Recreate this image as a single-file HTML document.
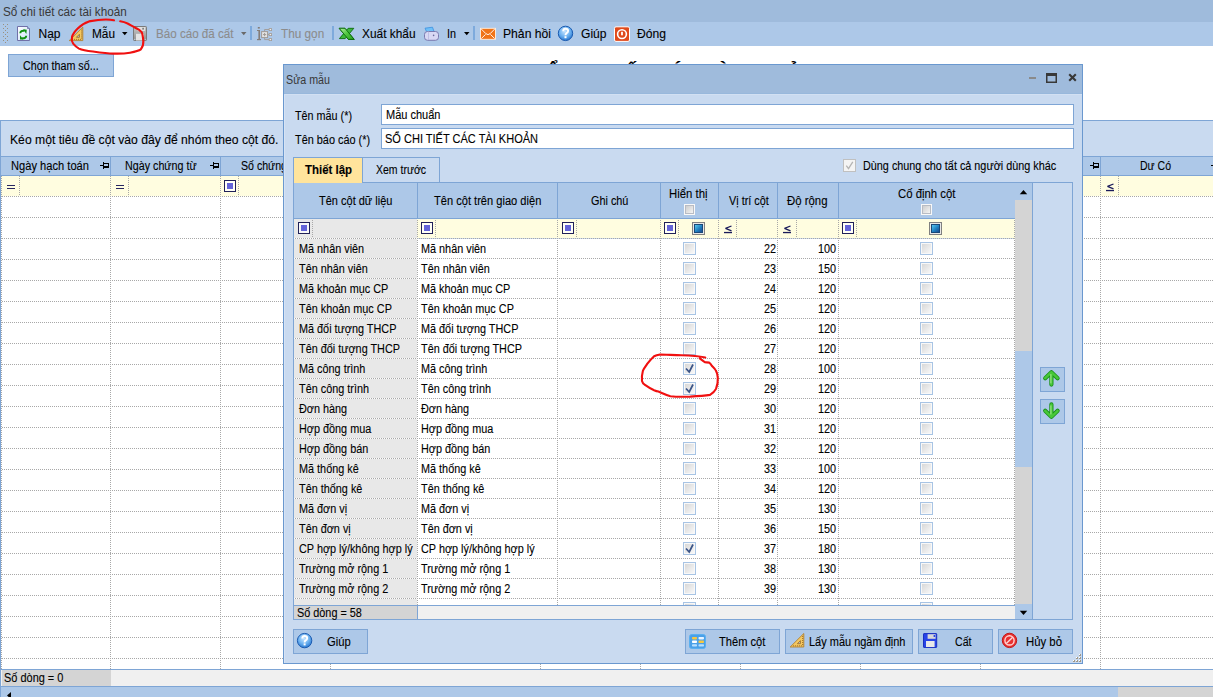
<!DOCTYPE html>
<html><head><meta charset="utf-8"><title>Sửa mẫu</title>
<style>
html,body{margin:0;padding:0;}
body{width:1213px;height:697px;overflow:hidden;position:relative;background:#fff;font-family:"Liberation Sans", sans-serif;}
.a{position:absolute;}
.t{position:absolute;white-space:pre;-webkit-text-stroke-width:0.1px;}
</style></head><body>
<svg width="0" height="0" style="position:absolute"><defs><radialGradient id="hg" cx="45%" cy="35%" r="65%"><stop offset="0" stop-color="#c8e6ff"/><stop offset="0.6" stop-color="#6ab0f0"/><stop offset="1" stop-color="#2a78d0"/></radialGradient><linearGradient id="gg" x1="0" y1="0" x2="1" y2="1"><stop offset="0" stop-color="#b8f0a8"/><stop offset="0.5" stop-color="#50c840"/><stop offset="1" stop-color="#28a020"/></linearGradient><linearGradient id="cbg" x1="0" y1="0" x2="1" y2="1"><stop offset="0" stop-color="#c8c8c8"/><stop offset="1" stop-color="#fafafa"/></linearGradient><linearGradient id="flg" x1="0" y1="0" x2="1" y2="1"><stop offset="0" stop-color="#70d0ff"/><stop offset="1" stop-color="#0858a0"/></linearGradient><linearGradient id="pageg" x1="0" y1="0" x2="1" y2="1"><stop offset="0" stop-color="#ffffff"/><stop offset="1" stop-color="#c8e0f8"/></linearGradient><linearGradient id="flopg" x1="0" y1="0" x2="0" y2="1"><stop offset="0" stop-color="#c8c8c8"/><stop offset="1" stop-color="#909090"/></linearGradient></defs></svg>
<div class="a" style="left:0px;top:0px;width:1213px;height:22px;background:#9fbbdc;"></div>
<div class="t" style="left:2.60px;top:5.03px;font-size:12px;line-height:14px;color:#383838;font-weight:normal;transform:scaleX(0.9768);transform-origin:0 0;-webkit-text-stroke-width:0;">Sổ chi tiết các tài khoản</div>
<div class="a" style="left:0px;top:22px;width:1213px;height:24px;background:#adc8e8;"></div>
<div class="a" style="left:3px;top:24px;width:1px;height:1px;background:#9a9080;"></div>
<div class="a" style="left:7px;top:24px;width:1px;height:1px;background:#9a9080;"></div>
<div class="a" style="left:5px;top:26px;width:1px;height:1px;background:#9a9080;"></div>
<div class="a" style="left:3px;top:28px;width:1px;height:1px;background:#9a9080;"></div>
<div class="a" style="left:7px;top:28px;width:1px;height:1px;background:#9a9080;"></div>
<div class="a" style="left:5px;top:30px;width:1px;height:1px;background:#9a9080;"></div>
<div class="a" style="left:3px;top:32px;width:1px;height:1px;background:#9a9080;"></div>
<div class="a" style="left:7px;top:32px;width:1px;height:1px;background:#9a9080;"></div>
<div class="a" style="left:5px;top:34px;width:1px;height:1px;background:#9a9080;"></div>
<div class="a" style="left:3px;top:36px;width:1px;height:1px;background:#9a9080;"></div>
<div class="a" style="left:7px;top:36px;width:1px;height:1px;background:#9a9080;"></div>
<div class="a" style="left:5px;top:38px;width:1px;height:1px;background:#9a9080;"></div>
<div class="a" style="left:3px;top:40px;width:1px;height:1px;background:#9a9080;"></div>
<div class="a" style="left:7px;top:40px;width:1px;height:1px;background:#9a9080;"></div>
<div class="a" style="left:5px;top:42px;width:1px;height:1px;background:#9a9080;"></div>
<div class="t" style="left:38.50px;top:27.03px;font-size:12px;line-height:14px;color:#000;font-weight:normal;">Nạp</div>
<div class="t" style="left:91.70px;top:27.03px;font-size:12px;line-height:14px;color:#000;font-weight:normal;transform:scaleX(0.9853);transform-origin:0 0;">Mẫu</div>
<div class="t" style="left:156.30px;top:27.03px;font-size:12px;line-height:14px;color:#8c8c8c;font-weight:normal;transform:scaleX(0.9681);transform-origin:0 0;">Báo cáo đã cất</div>
<div class="t" style="left:280.80px;top:27.03px;font-size:12px;line-height:14px;color:#8c8c8c;font-weight:normal;transform:scaleX(0.9811);transform-origin:0 0;">Thu gọn</div>
<div class="t" style="left:362.00px;top:27.03px;font-size:12px;line-height:14px;color:#000;font-weight:normal;transform:scaleX(0.9900);transform-origin:0 0;">Xuất khẩu</div>
<div class="t" style="left:447.00px;top:27.03px;font-size:12px;line-height:14px;color:#000;font-weight:normal;transform:scaleX(0.8993);transform-origin:0 0;">In</div>
<div class="t" style="left:503.30px;top:27.03px;font-size:12px;line-height:14px;color:#000;font-weight:normal;transform:scaleX(1.0132);transform-origin:0 0;">Phản hồi</div>
<div class="t" style="left:581.00px;top:27.03px;font-size:12px;line-height:14px;color:#000;font-weight:normal;transform:scaleX(1.0060);transform-origin:0 0;">Giúp</div>
<div class="t" style="left:637.20px;top:27.03px;font-size:12px;line-height:14px;color:#000;font-weight:normal;transform:scaleX(1.0109);transform-origin:0 0;">Đóng</div>
<svg class="a" style="left:121px;top:31px;overflow:visible;" width="8" height="6" viewBox="121 31 8 6"><path d="M122 32H127.5L124.75 35.2Z" fill="#000"/></svg>
<svg class="a" style="left:240px;top:31px;overflow:visible;" width="8" height="6" viewBox="240 31 8 6"><path d="M241 32H246.5L243.75 35.2Z" fill="#6a6a6a"/></svg>
<svg class="a" style="left:463px;top:31px;overflow:visible;" width="8" height="6" viewBox="463 31 8 6"><path d="M464 32H469.5L466.75 35.2Z" fill="#000"/></svg>
<div class="a" style="left:250px;top:26px;width:2px;height:14px;background:#7eaadc;"></div>
<div class="a" style="left:332px;top:26px;width:2px;height:14px;background:#7eaadc;"></div>
<div class="a" style="left:473px;top:26px;width:2px;height:14px;background:#7eaadc;"></div>
<svg class="a" style="left:16px;top:25px;overflow:visible;" width="16" height="17" viewBox="16 25 16 17"><path d="M17.5 26.5H27.5L29.5 28.5V40.5H17.5Z" fill="url(#pageg)" stroke="#7070a8"/><path d="M27.5 26.5V28.5H29.5" fill="#9ad0f0" stroke="#7070a8" stroke-width="0.8"/><path d="M20.3 33.3C20.3 31.2 22 30.5 24.5 30.8" stroke="#109010" stroke-width="2" fill="none"/><path d="M23.2 29.2L26.8 29.8L26.3 34Z" fill="#109010"/><path d="M26.2 35.8C26.2 37.8 24.5 38.6 22 38.3" stroke="#109010" stroke-width="2" fill="none"/><path d="M20 35.2V39.6H23.5Z" fill="#109010"/></svg>
<svg class="a" style="left:68px;top:26px;overflow:visible;" width="16" height="16" viewBox="68 26 16 16"><path d="M69.2 40.6L82.8 27.1V40.6Z" fill="#f4c860" stroke="#b08030" stroke-width="0.9" stroke-linejoin="round"/><path d="M76.4 37.3L79.4 34.300000000000004V37.3Z" fill="#adc8e8" stroke="#a07028" stroke-width="0.9"/><rect x="72.2" y="38.800000000000004" width="0.9" height="1.2" fill="#a07028"/><rect x="81.0" y="29.6" width="1.2" height="0.9" fill="#a07028"/><rect x="74.2" y="38.800000000000004" width="0.9" height="1.2" fill="#a07028"/><rect x="81.0" y="31.6" width="1.2" height="0.9" fill="#a07028"/><rect x="76.2" y="38.800000000000004" width="0.9" height="1.2" fill="#a07028"/><rect x="81.0" y="33.6" width="1.2" height="0.9" fill="#a07028"/><rect x="78.2" y="38.800000000000004" width="0.9" height="1.2" fill="#a07028"/><rect x="81.0" y="35.6" width="1.2" height="0.9" fill="#a07028"/><rect x="80.2" y="38.800000000000004" width="0.9" height="1.2" fill="#a07028"/><rect x="81.0" y="37.6" width="1.2" height="0.9" fill="#a07028"/></svg>
<svg class="a" style="left:132px;top:25px;overflow:visible;" width="16" height="17" viewBox="132 25 16 17"><rect x="133.5" y="26.5" width="13" height="14" rx="0.8" fill="url(#flopg)" stroke="#7a7a7a"/><rect x="137.5" y="27" width="7.5" height="4" fill="#e0e0e0"/><rect x="142.3" y="27.8" width="1.6" height="1.8" fill="#777"/><rect x="136" y="33.8" width="8" height="6.7" fill="#e4e4e4"/><circle cx="134.8" cy="39.3" r="0.6" fill="#cde"/><circle cx="145.2" cy="39.3" r="0.6" fill="#cde"/></svg>
<svg class="a" style="left:256px;top:26px;overflow:visible;" width="17" height="16" viewBox="256 26 17 16"><rect x="257.8" y="27" width="2" height="1.6" fill="#857d78"/><rect x="258.4" y="30" width="1.6" height="9.5" fill="#857d78"/><rect x="257" y="30" width="2.8" height="1" fill="#857d78"/><rect x="257" y="39" width="4" height="1.2" fill="#857d78"/><rect x="261.6" y="31.6" width="6" height="6" fill="#e4e4e4" stroke="#a09a95"/><path d="M264.6 33V36.2M263 34.6H266.2" stroke="#a09a95" stroke-width="1"/><path d="M264.6 31.5V29.5H269M267.7 34.6H269M264.6 37.6V39.6H269" stroke="#a09a95" stroke-width="0.9" fill="none"/><rect x="269.2" y="28.6" width="2.4" height="2" fill="#eee" stroke="#a09a95" stroke-width="0.8"/><rect x="269.2" y="33.6" width="2.4" height="2" fill="#eee" stroke="#a09a95" stroke-width="0.8"/><rect x="269.2" y="38.6" width="2.4" height="2" fill="#eee" stroke="#a09a95" stroke-width="0.8"/></svg>
<svg class="a" style="left:338px;top:27px;overflow:visible;" width="18" height="14" viewBox="338 27 18 14"><path d="M339.2 28.3H345L354.2 39.4H348.4Z" fill="url(#gg)" stroke="#0a6a0a" stroke-width="0.9" stroke-linejoin="round"/><path d="M348.2 28.3H353.8L345.2 38.6H339.4Z" fill="#3cb83c" stroke="#0a6a0a" stroke-width="0.9" stroke-linejoin="round"/><path d="M339.2 28.3H345L354.2 39.4H348.4Z" fill="url(#gg)" stroke="#0a6a0a" stroke-width="0.9" stroke-linejoin="round" opacity="0.95"/></svg>
<svg class="a" style="left:423px;top:26px;overflow:visible;" width="17" height="16" viewBox="423 26 17 16"><path d="M425 28.2L432.5 27.2L434 31.5H426.5Z" fill="#70c0f8" stroke="#3a90e0" stroke-width="0.8"/><rect x="424.5" y="31.5" width="14" height="8.8" rx="3" fill="#d8d8f4" stroke="#7a7ab0"/><path d="M428.5 31.5V40" stroke="#b8b8e0" stroke-width="0.8"/><circle cx="433.6" cy="35.4" r="0.8" fill="#6a6a9a"/></svg>
<svg class="a" style="left:479px;top:27px;overflow:visible;" width="18" height="14" viewBox="479 27 18 14"><rect x="480.5" y="28.3" width="15" height="11" fill="#f07418" stroke="#fff0e0" stroke-width="0.9"/><path d="M481.3 29L485.6 33.4Q488 36 490.4 33.4L494.7 29M481.3 38.6L485.6 34.4M494.7 38.6L490.4 34.4" stroke="#fff" stroke-width="0.9" fill="none"/></svg>
<svg class="a" style="left:557px;top:25px;overflow:visible;" width="18" height="18" viewBox="557 25 18 18"><circle cx="565.5" cy="33.4" r="7.2" fill="url(#hg)" stroke="#1a5ab0" stroke-width="1"/><path d="M563.2 31.2Q563.2 28.799999999999997 565.5 28.799999999999997Q568.1 28.799999999999997 568.1 31.0Q568.1 32.4 566.3 33.4Q565.5 34.0 565.5 35.199999999999996" stroke="#fff" stroke-width="1.9" fill="none"/><rect x="564.5" y="36.199999999999996" width="2" height="2" fill="#fff"/></svg>
<svg class="a" style="left:613px;top:25px;overflow:visible;" width="18" height="18" viewBox="613 25 18 18"><rect x="614.5" y="26.8" width="15" height="14.6" rx="1.5" fill="#e04a1c" stroke="#fff" stroke-width="1"/><circle cx="622" cy="34.1" r="4.4" fill="none" stroke="#fff" stroke-width="1.6"/><rect x="621.1" y="31.8" width="1.8" height="3.5" fill="#fff"/></svg>
<div class="a" style="left:8px;top:54px;width:106px;height:23px;background:#adc8e8;box-sizing:border-box;border:1px solid #7ea5d5;"></div>
<div class="t" style="left:23.40px;top:59.03px;font-size:12px;line-height:14px;color:#000;font-weight:normal;transform:scaleX(0.8925);transform-origin:0 0;">Chọn tham số...</div>
<div class="t" style="left:532.00px;top:61.39px;font-size:20px;line-height:23px;color:#000;font-weight:bold;">SỔ CHI TIẾT CÁC TÀI KHOẢN</div>
<div class="a" style="left:0px;top:120px;width:1213px;height:1px;background:#7ea5d5;"></div>
<div class="a" style="left:0px;top:120px;width:1px;height:577px;background:#7ea5d5;"></div>
<div class="a" style="left:1px;top:121px;width:1212px;height:35px;background:#c9daf0;"></div>
<div class="t" style="left:9.50px;top:133.03px;font-size:12px;line-height:14px;color:#000;font-weight:normal;transform:scaleX(1.0138);transform-origin:0 0;">Kéo một tiêu đề cột vào đây để nhóm theo cột đó.</div>
<div class="a" style="left:0px;top:156px;width:1213px;height:1px;background:#7ea5d5;"></div>
<div class="a" style="left:1px;top:157px;width:1212px;height:18px;background:#adc8e8;"></div>
<div class="a" style="left:0px;top:175px;width:1213px;height:1px;background:#7ea5d5;"></div>
<div class="a" style="left:1px;top:176px;width:1212px;height:20px;background:#fffde0;"></div>
<div class="a" style="left:1px;top:197px;width:1212px;height:472px;background:#fff;"></div>
<div class="a" style="left:110px;top:157px;width:1px;height:18px;background:#7ea5d5;"></div>
<div class="a" style="left:110px;top:176px;width:1px;height:493px;background:repeating-linear-gradient(to bottom,#a8a8a8 0 1px,transparent 1px 2px);"></div>
<div class="a" style="left:220px;top:157px;width:1px;height:18px;background:#7ea5d5;"></div>
<div class="a" style="left:220px;top:176px;width:1px;height:493px;background:repeating-linear-gradient(to bottom,#a8a8a8 0 1px,transparent 1px 2px);"></div>
<div class="a" style="left:330px;top:157px;width:1px;height:18px;background:#7ea5d5;"></div>
<div class="a" style="left:330px;top:176px;width:1px;height:493px;background:repeating-linear-gradient(to bottom,#a8a8a8 0 1px,transparent 1px 2px);"></div>
<div class="a" style="left:540px;top:157px;width:1px;height:18px;background:#7ea5d5;"></div>
<div class="a" style="left:540px;top:176px;width:1px;height:493px;background:repeating-linear-gradient(to bottom,#a8a8a8 0 1px,transparent 1px 2px);"></div>
<div class="a" style="left:640px;top:157px;width:1px;height:18px;background:#7ea5d5;"></div>
<div class="a" style="left:640px;top:176px;width:1px;height:493px;background:repeating-linear-gradient(to bottom,#a8a8a8 0 1px,transparent 1px 2px);"></div>
<div class="a" style="left:740px;top:157px;width:1px;height:18px;background:#7ea5d5;"></div>
<div class="a" style="left:740px;top:176px;width:1px;height:493px;background:repeating-linear-gradient(to bottom,#a8a8a8 0 1px,transparent 1px 2px);"></div>
<div class="a" style="left:860px;top:157px;width:1px;height:18px;background:#7ea5d5;"></div>
<div class="a" style="left:860px;top:176px;width:1px;height:493px;background:repeating-linear-gradient(to bottom,#a8a8a8 0 1px,transparent 1px 2px);"></div>
<div class="a" style="left:980px;top:157px;width:1px;height:18px;background:#7ea5d5;"></div>
<div class="a" style="left:980px;top:176px;width:1px;height:493px;background:repeating-linear-gradient(to bottom,#a8a8a8 0 1px,transparent 1px 2px);"></div>
<div class="a" style="left:1100px;top:157px;width:1px;height:18px;background:#7ea5d5;"></div>
<div class="a" style="left:1100px;top:176px;width:1px;height:493px;background:repeating-linear-gradient(to bottom,#a8a8a8 0 1px,transparent 1px 2px);"></div>
<div class="a" style="left:1px;top:196px;width:1212px;height:1px;background:repeating-linear-gradient(to right,transparent 0 1px,#a8a8a8 1px 2px);"></div>
<div class="a" style="left:1px;top:217px;width:1212px;height:1px;background:repeating-linear-gradient(to right,transparent 0 1px,#a8a8a8 1px 2px);"></div>
<div class="a" style="left:1px;top:238px;width:1212px;height:1px;background:repeating-linear-gradient(to right,transparent 0 1px,#a8a8a8 1px 2px);"></div>
<div class="a" style="left:1px;top:259px;width:1212px;height:1px;background:repeating-linear-gradient(to right,transparent 0 1px,#a8a8a8 1px 2px);"></div>
<div class="a" style="left:1px;top:280px;width:1212px;height:1px;background:repeating-linear-gradient(to right,transparent 0 1px,#a8a8a8 1px 2px);"></div>
<div class="a" style="left:1px;top:301px;width:1212px;height:1px;background:repeating-linear-gradient(to right,transparent 0 1px,#a8a8a8 1px 2px);"></div>
<div class="a" style="left:1px;top:322px;width:1212px;height:1px;background:repeating-linear-gradient(to right,transparent 0 1px,#a8a8a8 1px 2px);"></div>
<div class="a" style="left:1px;top:343px;width:1212px;height:1px;background:repeating-linear-gradient(to right,transparent 0 1px,#a8a8a8 1px 2px);"></div>
<div class="a" style="left:1px;top:364px;width:1212px;height:1px;background:repeating-linear-gradient(to right,transparent 0 1px,#a8a8a8 1px 2px);"></div>
<div class="a" style="left:1px;top:385px;width:1212px;height:1px;background:repeating-linear-gradient(to right,transparent 0 1px,#a8a8a8 1px 2px);"></div>
<div class="a" style="left:1px;top:406px;width:1212px;height:1px;background:repeating-linear-gradient(to right,transparent 0 1px,#a8a8a8 1px 2px);"></div>
<div class="a" style="left:1px;top:427px;width:1212px;height:1px;background:repeating-linear-gradient(to right,transparent 0 1px,#a8a8a8 1px 2px);"></div>
<div class="a" style="left:1px;top:448px;width:1212px;height:1px;background:repeating-linear-gradient(to right,transparent 0 1px,#a8a8a8 1px 2px);"></div>
<div class="a" style="left:1px;top:469px;width:1212px;height:1px;background:repeating-linear-gradient(to right,transparent 0 1px,#a8a8a8 1px 2px);"></div>
<div class="a" style="left:1px;top:490px;width:1212px;height:1px;background:repeating-linear-gradient(to right,transparent 0 1px,#a8a8a8 1px 2px);"></div>
<div class="a" style="left:1px;top:511px;width:1212px;height:1px;background:repeating-linear-gradient(to right,transparent 0 1px,#a8a8a8 1px 2px);"></div>
<div class="a" style="left:1px;top:532px;width:1212px;height:1px;background:repeating-linear-gradient(to right,transparent 0 1px,#a8a8a8 1px 2px);"></div>
<div class="a" style="left:1px;top:553px;width:1212px;height:1px;background:repeating-linear-gradient(to right,transparent 0 1px,#a8a8a8 1px 2px);"></div>
<div class="a" style="left:1px;top:574px;width:1212px;height:1px;background:repeating-linear-gradient(to right,transparent 0 1px,#a8a8a8 1px 2px);"></div>
<div class="a" style="left:1px;top:595px;width:1212px;height:1px;background:repeating-linear-gradient(to right,transparent 0 1px,#a8a8a8 1px 2px);"></div>
<div class="a" style="left:1px;top:616px;width:1212px;height:1px;background:repeating-linear-gradient(to right,transparent 0 1px,#a8a8a8 1px 2px);"></div>
<div class="a" style="left:1px;top:637px;width:1212px;height:1px;background:repeating-linear-gradient(to right,transparent 0 1px,#a8a8a8 1px 2px);"></div>
<div class="a" style="left:1px;top:658px;width:1212px;height:1px;background:repeating-linear-gradient(to right,transparent 0 1px,#a8a8a8 1px 2px);"></div>
<div class="a" style="left:1px;top:176px;width:1px;height:493px;background:repeating-linear-gradient(to bottom,#a8a8a8 0 1px,transparent 1px 2px);"></div>
<div class="t" style="left:10.60px;top:159.03px;font-size:12px;line-height:14px;color:#000;font-weight:normal;transform:scaleX(0.9279);transform-origin:0 0;">Ngày hạch toán</div>
<div class="t" style="left:124.50px;top:159.03px;font-size:12px;line-height:14px;color:#000;font-weight:normal;transform:scaleX(0.8938);transform-origin:0 0;">Ngày chứng từ</div>
<div class="t" style="left:240.80px;top:159.03px;font-size:12px;line-height:14px;color:#000;font-weight:normal;transform:scaleX(0.8837);transform-origin:0 0;">Số chứng từ</div>
<div class="t" style="left:1140.00px;top:159.03px;font-size:12px;line-height:14px;color:#000;font-weight:normal;transform:scaleX(0.8764);transform-origin:0 0;">Dư Có</div>
<div class="a" style="left:100px;top:165px;width:3px;height:1px;background:#000;"></div>
<div class="a" style="left:103px;top:162px;width:1px;height:7px;background:#000;"></div>
<div class="a" style="left:104px;top:163px;width:5px;height:1px;background:#000;"></div>
<div class="a" style="left:108px;top:163px;width:1px;height:5px;background:#000;"></div>
<div class="a" style="left:104px;top:166px;width:5px;height:2px;background:#000;"></div>
<div class="a" style="left:210px;top:165px;width:3px;height:1px;background:#000;"></div>
<div class="a" style="left:213px;top:162px;width:1px;height:7px;background:#000;"></div>
<div class="a" style="left:214px;top:163px;width:5px;height:1px;background:#000;"></div>
<div class="a" style="left:218px;top:163px;width:1px;height:5px;background:#000;"></div>
<div class="a" style="left:214px;top:166px;width:5px;height:2px;background:#000;"></div>
<div class="a" style="left:1090px;top:165px;width:3px;height:1px;background:#000;"></div>
<div class="a" style="left:1093px;top:162px;width:1px;height:7px;background:#000;"></div>
<div class="a" style="left:1094px;top:163px;width:5px;height:1px;background:#000;"></div>
<div class="a" style="left:1098px;top:163px;width:1px;height:5px;background:#000;"></div>
<div class="a" style="left:1094px;top:166px;width:5px;height:2px;background:#000;"></div>
<div class="a" style="left:1211px;top:165px;width:3px;height:1px;background:#000;"></div>
<div class="a" style="left:1214px;top:162px;width:1px;height:7px;background:#000;"></div>
<div class="a" style="left:1215px;top:163px;width:5px;height:1px;background:#000;"></div>
<div class="a" style="left:1219px;top:163px;width:1px;height:5px;background:#000;"></div>
<div class="a" style="left:1215px;top:166px;width:5px;height:2px;background:#000;"></div>
<div class="a" style="left:7px;top:184.6px;width:8px;height:1.6px;background:#262660;"></div>
<div class="a" style="left:7px;top:187.6px;width:8px;height:1.6px;background:#262660;"></div>
<div class="a" style="left:116px;top:184.6px;width:8px;height:1.6px;background:#262660;"></div>
<div class="a" style="left:116px;top:187.6px;width:8px;height:1.6px;background:#262660;"></div>
<div class="a" style="left:19px;top:176px;width:1px;height:20px;background:repeating-linear-gradient(to bottom,#a8a8a8 0 1px,transparent 1px 2px);"></div>
<div class="a" style="left:128px;top:176px;width:1px;height:20px;background:repeating-linear-gradient(to bottom,#a8a8a8 0 1px,transparent 1px 2px);"></div>
<div class="a" style="left:238px;top:176px;width:1px;height:20px;background:repeating-linear-gradient(to bottom,#a8a8a8 0 1px,transparent 1px 2px);"></div>
<div class="a" style="left:1118px;top:176px;width:1px;height:20px;background:repeating-linear-gradient(to bottom,#a8a8a8 0 1px,transparent 1px 2px);"></div>
<div class="a" style="left:224px;top:180px;width:12px;height:12px;background:rgba(255,255,255,0.7);box-sizing:border-box;border:1px solid #202058;"></div>
<div class="a" style="left:227px;top:183px;width:6px;height:6px;background:#6464d8;"></div>
<svg class="a" style="left:1105px;top:182px;overflow:visible;" width="11" height="11" viewBox="1105 182 11 11"><path d="M1113.5 184L1107.5 186.3L1113.5 188.8" stroke="#1a1a5a" stroke-width="1.3" fill="none" stroke-linejoin="bevel"/><rect x="1106" y="189.9" width="8" height="1.3" fill="#1a1a5a"/></svg>
<div class="a" style="left:0px;top:669px;width:1213px;height:1px;background:#7ea5d5;"></div>
<div class="a" style="left:1px;top:670px;width:1212px;height:16px;background:#f0f0f0;"></div>
<div class="a" style="left:2px;top:670px;width:109px;height:16px;background:#d4d4d4;"></div>
<div class="t" style="left:4.40px;top:671.03px;font-size:12px;line-height:14px;color:#000;font-weight:normal;transform:scaleX(0.9130);transform-origin:0 0;">Số dòng = 0</div>
<div class="a" style="left:0px;top:686px;width:1213px;height:1px;background:#7ea5d5;"></div>
<div class="a" style="left:1px;top:687px;width:1117px;height:10px;background:#adc8e8;"></div>
<div class="a" style="left:1118px;top:687px;width:95px;height:10px;background:#d4d4d4;"></div>
<svg class="a" style="left:6px;top:690px;overflow:visible;" width="8" height="8" viewBox="6 690 8 8"><path d="M11 692L7 695.5L11 699Z" fill="#000"/></svg>
<div class="a" style="left:0px;top:669px;width:1px;height:28px;background:#7ea5d5;"></div>
<div class="a" style="left:283px;top:64px;width:800px;height:600px;background:#c9daf0;box-sizing:border-box;border:1px solid #6a98cf;"></div>
<div class="a" style="left:284px;top:94px;width:1px;height:569px;background:#d6e3f4;"></div>
<div class="a" style="left:284px;top:65px;width:798px;height:29px;background:#9fbbdc;"></div>
<div class="a" style="left:284px;top:93px;width:798px;height:1px;background:#98b8dc;"></div>
<div class="a" style="left:284px;top:94px;width:798px;height:1px;background:#d2e0f3;"></div>
<div class="t" style="left:286.00px;top:73.03px;font-size:12px;line-height:14px;color:#383838;font-weight:normal;transform:scaleX(0.8909);transform-origin:0 0;-webkit-text-stroke-width:0;">Sửa mẫu</div>
<div class="a" style="left:1029px;top:77px;width:7px;height:2px;background:#8a8a8a;"></div>
<svg class="a" style="left:1045px;top:72px;overflow:visible;" width="14" height="12" viewBox="1045 72 14 12"><rect x="1046.75" y="73.75" width="9.5" height="8.5" fill="none" stroke="#383838" stroke-width="1.5"/><rect x="1046" y="73" width="11" height="3" fill="#383838"/></svg>
<svg class="a" style="left:1067px;top:72px;overflow:visible;" width="11" height="11" viewBox="1067 72 11 11"><path d="M1069.2 74.2L1075.8 80.8M1075.8 74.2L1069.2 80.8" stroke="#383838" stroke-width="2.1"/></svg>
<div class="t" style="left:295.20px;top:109.03px;font-size:12px;line-height:14px;color:#000;font-weight:normal;transform:scaleX(0.8997);transform-origin:0 0;">Tên mẫu (*)</div>
<div class="t" style="left:295.20px;top:133.03px;font-size:12px;line-height:14px;color:#000;font-weight:normal;transform:scaleX(0.9068);transform-origin:0 0;">Tên báo cáo (*)</div>
<div class="a" style="left:381px;top:104px;width:693px;height:21px;background:#fff;box-sizing:border-box;border:1px solid #7ea5d5;"></div>
<div class="a" style="left:381px;top:128px;width:693px;height:21px;background:#fff;box-sizing:border-box;border:1px solid #7ea5d5;"></div>
<div class="t" style="left:385.50px;top:108.03px;font-size:12px;line-height:14px;color:#000;font-weight:normal;transform:scaleX(0.9179);transform-origin:0 0;">Mẫu chuẩn</div>
<div class="t" style="left:385.40px;top:132.03px;font-size:12px;line-height:14px;color:#000;font-weight:normal;transform:scaleX(0.9178);transform-origin:0 0;">SỔ CHI TIẾT CÁC TÀI KHOẢN</div>
<div class="a" style="left:293px;top:157px;width:147px;height:26px;background:#c9daf0;box-sizing:border-box;border:1px solid #7ea5d5;border-bottom:none;"></div>
<div class="a" style="left:294px;top:158px;width:68px;height:25px;background:#ffe49c;"></div>
<div class="a" style="left:362px;top:158px;width:1px;height:24px;background:#7ea5d5;"></div>
<div class="t" style="left:305.00px;top:163.03px;font-size:12px;line-height:14px;color:#000;font-weight:bold;transform:scaleX(0.9526);transform-origin:0 0;">Thiết lập</div>
<div class="t" style="left:375.80px;top:163.03px;font-size:12px;line-height:14px;color:#000;font-weight:normal;transform:scaleX(0.8753);transform-origin:0 0;">Xem trước</div>
<div class="a" style="left:843px;top:159px;width:13px;height:13px;background:#f4f4f4;box-sizing:border-box;border:1px solid #c0c0c0;"></div>
<svg class="a" style="left:844px;top:160px;overflow:visible;" width="11" height="11" viewBox="844 160 11 11"><path d="M846.3 165.6L848.5 168.6L852.8 161.8" stroke="#b4b4b4" stroke-width="1.3" fill="none"/></svg>
<div class="t" style="left:862.60px;top:159.03px;font-size:12px;line-height:14px;color:#000;font-weight:normal;transform:scaleX(0.9022);transform-origin:0 0;">Dùng chung cho tất cả người dùng khác</div>
<div class="a" style="left:293px;top:182px;width:780px;height:438px;background:#c9daf0;box-sizing:border-box;border:1px solid #7ea5d5;"></div>
<div class="a" style="left:294px;top:182px;width:68px;height:1px;background:#ffe49c;"></div>
<div class="a" style="left:294px;top:183px;width:68px;height:1px;background:#a6c6ec;"></div>
<div class="a" style="left:294px;top:183px;width:721px;height:35px;background:#adc8e8;"></div>
<div class="a" style="left:294px;top:218px;width:721px;height:1px;background:#7ea5d5;"></div>
<div class="a" style="left:417px;top:183px;width:1px;height:35px;background:#7ea5d5;"></div>
<div class="a" style="left:557px;top:183px;width:1px;height:35px;background:#7ea5d5;"></div>
<div class="a" style="left:660px;top:183px;width:1px;height:35px;background:#7ea5d5;"></div>
<div class="a" style="left:718px;top:183px;width:1px;height:35px;background:#7ea5d5;"></div>
<div class="a" style="left:777px;top:183px;width:1px;height:35px;background:#7ea5d5;"></div>
<div class="a" style="left:838px;top:183px;width:1px;height:35px;background:#7ea5d5;"></div>
<div class="a" style="left:1015px;top:183px;width:17px;height:422px;background:#d4d4d4;"></div>
<div class="a" style="left:1015px;top:183px;width:17px;height:17px;background:#adc8e8;"></div>
<svg class="a" style="left:1018px;top:188px;overflow:visible;" width="11" height="8" viewBox="1018 188 11 8"><path d="M1019.8 194.3H1027.2L1023.5 190Z" fill="#000"/></svg>
<div class="a" style="left:1015px;top:351px;width:17px;height:116px;background:#adc8e8;"></div>
<div class="a" style="left:1015px;top:604px;width:17px;height:15px;background:#adc8e8;"></div>
<svg class="a" style="left:1018px;top:609px;overflow:visible;" width="11" height="8" viewBox="1018 609 11 8"><path d="M1019.8 610.8H1027.2L1023.5 615Z" fill="#000"/></svg>
<div class="a" style="left:1032px;top:183px;width:1px;height:436px;background:#7ea5d5;"></div>
<div class="t" style="left:319.30px;top:194.03px;font-size:12px;line-height:14px;color:#000;font-weight:normal;transform:scaleX(0.9166);transform-origin:0 0;">Tên cột dữ liệu</div>
<div class="t" style="left:434.35px;top:194.03px;font-size:12px;line-height:14px;color:#000;font-weight:normal;transform:scaleX(0.9244);transform-origin:0 0;">Tên cột trên giao diện</div>
<div class="t" style="left:590.80px;top:194.03px;font-size:12px;line-height:14px;color:#000;font-weight:normal;transform:scaleX(0.9042);transform-origin:0 0;">Ghi chú</div>
<div class="t" style="left:669.25px;top:187.03px;font-size:12px;line-height:14px;color:#000;font-weight:normal;transform:scaleX(0.9462);transform-origin:0 0;">Hiển thị</div>
<div class="t" style="left:728.60px;top:194.03px;font-size:12px;line-height:14px;color:#000;font-weight:normal;transform:scaleX(0.9042);transform-origin:0 0;">Vị trí cột</div>
<div class="t" style="left:787.25px;top:194.03px;font-size:12px;line-height:14px;color:#000;font-weight:normal;transform:scaleX(0.9487);transform-origin:0 0;">Độ rộng</div>
<div class="t" style="left:897.75px;top:187.03px;font-size:12px;line-height:14px;color:#000;font-weight:normal;transform:scaleX(0.9472);transform-origin:0 0;">Cố định cột</div>
<div class="a" style="left:684px;top:204px;width:11px;height:11px;background:linear-gradient(135deg,#c8c8c8,#fafafa);box-sizing:border-box;border:1px solid #f8f8f8;"></div>
<div class="a" style="left:685px;top:205px;width:9px;height:9px;background:transparent;box-sizing:border-box;border:1px solid #b8bcc4;"></div>
<div class="a" style="left:921px;top:204px;width:11px;height:11px;background:linear-gradient(135deg,#c8c8c8,#fafafa);box-sizing:border-box;border:1px solid #f8f8f8;"></div>
<div class="a" style="left:922px;top:205px;width:9px;height:9px;background:transparent;box-sizing:border-box;border:1px solid #b8bcc4;"></div>
<div class="a" style="left:294px;top:219px;width:721px;height:19px;background:#fffde0;"></div>
<div class="a" style="left:294px;top:219px;width:123px;height:19px;background:#e8e8e8;"></div>
<div class="a" style="left:298px;top:222px;width:12px;height:12px;background:rgba(255,255,255,0.7);box-sizing:border-box;border:1px solid #202058;"></div>
<div class="a" style="left:301px;top:225px;width:6px;height:6px;background:#6464d8;"></div>
<div class="a" style="left:421px;top:222px;width:12px;height:12px;background:rgba(255,255,255,0.7);box-sizing:border-box;border:1px solid #202058;"></div>
<div class="a" style="left:424px;top:225px;width:6px;height:6px;background:#6464d8;"></div>
<div class="a" style="left:562px;top:222px;width:12px;height:12px;background:rgba(255,255,255,0.7);box-sizing:border-box;border:1px solid #202058;"></div>
<div class="a" style="left:565px;top:225px;width:6px;height:6px;background:#6464d8;"></div>
<div class="a" style="left:664px;top:222px;width:12px;height:12px;background:rgba(255,255,255,0.7);box-sizing:border-box;border:1px solid #202058;"></div>
<div class="a" style="left:667px;top:225px;width:6px;height:6px;background:#6464d8;"></div>
<div class="a" style="left:842px;top:222px;width:12px;height:12px;background:rgba(255,255,255,0.7);box-sizing:border-box;border:1px solid #202058;"></div>
<div class="a" style="left:845px;top:225px;width:6px;height:6px;background:#6464d8;"></div>
<div class="a" style="left:692px;top:222px;width:13px;height:13px;background:linear-gradient(135deg,#6ad0ff,#0a5aa8);box-sizing:border-box;border:1px solid #808080;"></div>
<div class="a" style="left:693px;top:223px;width:11px;height:11px;background:transparent;box-sizing:border-box;border:1px solid #e8e8e8;"></div>
<div class="a" style="left:694px;top:224px;width:9px;height:9px;background:linear-gradient(135deg,#58c8f0,#2080c0 55%,#1a4a90);box-sizing:border-box;border:1px solid #1a4878;"></div>
<div class="a" style="left:929px;top:222px;width:13px;height:13px;background:linear-gradient(135deg,#6ad0ff,#0a5aa8);box-sizing:border-box;border:1px solid #808080;"></div>
<div class="a" style="left:930px;top:223px;width:11px;height:11px;background:transparent;box-sizing:border-box;border:1px solid #e8e8e8;"></div>
<div class="a" style="left:931px;top:224px;width:9px;height:9px;background:linear-gradient(135deg,#58c8f0,#2080c0 55%,#1a4a90);box-sizing:border-box;border:1px solid #1a4878;"></div>
<svg class="a" style="left:723px;top:224px;overflow:visible;" width="11" height="11" viewBox="723 224 11 11"><path d="M731.5 226L725.5 228.3L731.5 230.8" stroke="#1a1a5a" stroke-width="1.3" fill="none" stroke-linejoin="bevel"/><rect x="724" y="231.9" width="8" height="1.3" fill="#1a1a5a"/></svg>
<svg class="a" style="left:782px;top:224px;overflow:visible;" width="11" height="11" viewBox="782 224 11 11"><path d="M790.5 226L784.5 228.3L790.5 230.8" stroke="#1a1a5a" stroke-width="1.3" fill="none" stroke-linejoin="bevel"/><rect x="783" y="231.9" width="8" height="1.3" fill="#1a1a5a"/></svg>
<div class="a" style="left:294px;top:239px;width:721px;height:366px;background:#fff;"></div>
<div class="a" style="left:294px;top:239px;width:123px;height:366px;background:#e8e8e8;"></div>
<div class="a" style="left:417px;top:238px;width:598px;height:1px;background:repeating-linear-gradient(to right,#a8a8a8 0 1px,transparent 1px 2px);"></div>
<div class="a" style="left:294px;top:238px;width:123px;height:1px;background:repeating-linear-gradient(to right,#fff 0 1px,#a8a8a8 1px 2px);"></div>
<div class="a" style="left:417px;top:258px;width:598px;height:1px;background:repeating-linear-gradient(to right,#a8a8a8 0 1px,transparent 1px 2px);"></div>
<div class="a" style="left:294px;top:258px;width:123px;height:1px;background:repeating-linear-gradient(to right,#fff 0 1px,#a8a8a8 1px 2px);"></div>
<div class="a" style="left:417px;top:278px;width:598px;height:1px;background:repeating-linear-gradient(to right,#a8a8a8 0 1px,transparent 1px 2px);"></div>
<div class="a" style="left:294px;top:278px;width:123px;height:1px;background:repeating-linear-gradient(to right,#fff 0 1px,#a8a8a8 1px 2px);"></div>
<div class="a" style="left:417px;top:298px;width:598px;height:1px;background:repeating-linear-gradient(to right,#a8a8a8 0 1px,transparent 1px 2px);"></div>
<div class="a" style="left:294px;top:298px;width:123px;height:1px;background:repeating-linear-gradient(to right,#fff 0 1px,#a8a8a8 1px 2px);"></div>
<div class="a" style="left:417px;top:318px;width:598px;height:1px;background:repeating-linear-gradient(to right,#a8a8a8 0 1px,transparent 1px 2px);"></div>
<div class="a" style="left:294px;top:318px;width:123px;height:1px;background:repeating-linear-gradient(to right,#fff 0 1px,#a8a8a8 1px 2px);"></div>
<div class="a" style="left:417px;top:338px;width:598px;height:1px;background:repeating-linear-gradient(to right,#a8a8a8 0 1px,transparent 1px 2px);"></div>
<div class="a" style="left:294px;top:338px;width:123px;height:1px;background:repeating-linear-gradient(to right,#fff 0 1px,#a8a8a8 1px 2px);"></div>
<div class="a" style="left:417px;top:358px;width:598px;height:1px;background:repeating-linear-gradient(to right,#a8a8a8 0 1px,transparent 1px 2px);"></div>
<div class="a" style="left:294px;top:358px;width:123px;height:1px;background:repeating-linear-gradient(to right,#fff 0 1px,#a8a8a8 1px 2px);"></div>
<div class="a" style="left:417px;top:378px;width:598px;height:1px;background:repeating-linear-gradient(to right,#a8a8a8 0 1px,transparent 1px 2px);"></div>
<div class="a" style="left:294px;top:378px;width:123px;height:1px;background:repeating-linear-gradient(to right,#fff 0 1px,#a8a8a8 1px 2px);"></div>
<div class="a" style="left:417px;top:398px;width:598px;height:1px;background:repeating-linear-gradient(to right,#a8a8a8 0 1px,transparent 1px 2px);"></div>
<div class="a" style="left:294px;top:398px;width:123px;height:1px;background:repeating-linear-gradient(to right,#fff 0 1px,#a8a8a8 1px 2px);"></div>
<div class="a" style="left:417px;top:418px;width:598px;height:1px;background:repeating-linear-gradient(to right,#a8a8a8 0 1px,transparent 1px 2px);"></div>
<div class="a" style="left:294px;top:418px;width:123px;height:1px;background:repeating-linear-gradient(to right,#fff 0 1px,#a8a8a8 1px 2px);"></div>
<div class="a" style="left:417px;top:438px;width:598px;height:1px;background:repeating-linear-gradient(to right,#a8a8a8 0 1px,transparent 1px 2px);"></div>
<div class="a" style="left:294px;top:438px;width:123px;height:1px;background:repeating-linear-gradient(to right,#fff 0 1px,#a8a8a8 1px 2px);"></div>
<div class="a" style="left:417px;top:458px;width:598px;height:1px;background:repeating-linear-gradient(to right,#a8a8a8 0 1px,transparent 1px 2px);"></div>
<div class="a" style="left:294px;top:458px;width:123px;height:1px;background:repeating-linear-gradient(to right,#fff 0 1px,#a8a8a8 1px 2px);"></div>
<div class="a" style="left:417px;top:478px;width:598px;height:1px;background:repeating-linear-gradient(to right,#a8a8a8 0 1px,transparent 1px 2px);"></div>
<div class="a" style="left:294px;top:478px;width:123px;height:1px;background:repeating-linear-gradient(to right,#fff 0 1px,#a8a8a8 1px 2px);"></div>
<div class="a" style="left:417px;top:498px;width:598px;height:1px;background:repeating-linear-gradient(to right,#a8a8a8 0 1px,transparent 1px 2px);"></div>
<div class="a" style="left:294px;top:498px;width:123px;height:1px;background:repeating-linear-gradient(to right,#fff 0 1px,#a8a8a8 1px 2px);"></div>
<div class="a" style="left:417px;top:518px;width:598px;height:1px;background:repeating-linear-gradient(to right,#a8a8a8 0 1px,transparent 1px 2px);"></div>
<div class="a" style="left:294px;top:518px;width:123px;height:1px;background:repeating-linear-gradient(to right,#fff 0 1px,#a8a8a8 1px 2px);"></div>
<div class="a" style="left:417px;top:538px;width:598px;height:1px;background:repeating-linear-gradient(to right,#a8a8a8 0 1px,transparent 1px 2px);"></div>
<div class="a" style="left:294px;top:538px;width:123px;height:1px;background:repeating-linear-gradient(to right,#fff 0 1px,#a8a8a8 1px 2px);"></div>
<div class="a" style="left:417px;top:558px;width:598px;height:1px;background:repeating-linear-gradient(to right,#a8a8a8 0 1px,transparent 1px 2px);"></div>
<div class="a" style="left:294px;top:558px;width:123px;height:1px;background:repeating-linear-gradient(to right,#fff 0 1px,#a8a8a8 1px 2px);"></div>
<div class="a" style="left:417px;top:578px;width:598px;height:1px;background:repeating-linear-gradient(to right,#a8a8a8 0 1px,transparent 1px 2px);"></div>
<div class="a" style="left:294px;top:578px;width:123px;height:1px;background:repeating-linear-gradient(to right,#fff 0 1px,#a8a8a8 1px 2px);"></div>
<div class="a" style="left:417px;top:598px;width:598px;height:1px;background:repeating-linear-gradient(to right,#a8a8a8 0 1px,transparent 1px 2px);"></div>
<div class="a" style="left:294px;top:598px;width:123px;height:1px;background:repeating-linear-gradient(to right,#fff 0 1px,#a8a8a8 1px 2px);"></div>
<div class="a" style="left:312px;top:219px;width:1px;height:19px;background:repeating-linear-gradient(to bottom,transparent 0 1px,#a8a8a8 1px 2px);"></div>
<div class="a" style="left:435px;top:219px;width:1px;height:19px;background:repeating-linear-gradient(to bottom,transparent 0 1px,#a8a8a8 1px 2px);"></div>
<div class="a" style="left:576px;top:219px;width:1px;height:19px;background:repeating-linear-gradient(to bottom,transparent 0 1px,#a8a8a8 1px 2px);"></div>
<div class="a" style="left:678px;top:219px;width:1px;height:19px;background:repeating-linear-gradient(to bottom,transparent 0 1px,#a8a8a8 1px 2px);"></div>
<div class="a" style="left:736px;top:219px;width:1px;height:19px;background:repeating-linear-gradient(to bottom,transparent 0 1px,#a8a8a8 1px 2px);"></div>
<div class="a" style="left:796px;top:219px;width:1px;height:19px;background:repeating-linear-gradient(to bottom,transparent 0 1px,#a8a8a8 1px 2px);"></div>
<div class="a" style="left:856px;top:219px;width:1px;height:19px;background:repeating-linear-gradient(to bottom,transparent 0 1px,#a8a8a8 1px 2px);"></div>
<div class="a" style="left:417px;top:219px;width:1px;height:386px;background:repeating-linear-gradient(to bottom,transparent 0 1px,#a8a8a8 1px 2px);"></div>
<div class="a" style="left:557px;top:219px;width:1px;height:386px;background:repeating-linear-gradient(to bottom,transparent 0 1px,#a8a8a8 1px 2px);"></div>
<div class="a" style="left:660px;top:219px;width:1px;height:386px;background:repeating-linear-gradient(to bottom,transparent 0 1px,#a8a8a8 1px 2px);"></div>
<div class="a" style="left:718px;top:219px;width:1px;height:386px;background:repeating-linear-gradient(to bottom,transparent 0 1px,#a8a8a8 1px 2px);"></div>
<div class="a" style="left:777px;top:219px;width:1px;height:386px;background:repeating-linear-gradient(to bottom,transparent 0 1px,#a8a8a8 1px 2px);"></div>
<div class="a" style="left:838px;top:219px;width:1px;height:386px;background:repeating-linear-gradient(to bottom,transparent 0 1px,#a8a8a8 1px 2px);"></div>
<div class="a" style="left:1014px;top:219px;width:1px;height:386px;background:repeating-linear-gradient(to bottom,transparent 0 1px,#a8a8a8 1px 2px);"></div>
<div class="t" style="left:298.60px;top:242.03px;font-size:12px;line-height:14px;color:#000;font-weight:normal;transform:scaleX(0.9042);transform-origin:0 0;">Mã nhân viên</div>
<div class="t" style="left:421.40px;top:242.03px;font-size:12px;line-height:14px;color:#000;font-weight:normal;transform:scaleX(0.9042);transform-origin:0 0;">Mã nhân viên</div>
<div class="t" style="left:763.93px;top:242.03px;font-size:12px;line-height:14px;color:#000;font-weight:normal;transform:scaleX(0.9042);transform-origin:0 0;">22</div>
<div class="t" style="left:818.20px;top:242.03px;font-size:12px;line-height:14px;color:#000;font-weight:normal;transform:scaleX(0.9042);transform-origin:0 0;">100</div>
<div class="a" style="left:683px;top:242px;width:13px;height:13px;background:linear-gradient(135deg,#d4d4d4,#fcfcfc);box-sizing:border-box;border:1px solid #a8c4e4;"></div>
<div class="a" style="left:684px;top:243px;width:11px;height:11px;background:transparent;box-sizing:border-box;border:1px solid #f8f8f8;"></div>
<div class="a" style="left:920px;top:242px;width:13px;height:13px;background:linear-gradient(135deg,#d4d4d4,#fcfcfc);box-sizing:border-box;border:1px solid #a8c4e4;"></div>
<div class="a" style="left:921px;top:243px;width:11px;height:11px;background:transparent;box-sizing:border-box;border:1px solid #f8f8f8;"></div>
<div class="t" style="left:298.60px;top:262.03px;font-size:12px;line-height:14px;color:#000;font-weight:normal;transform:scaleX(0.9042);transform-origin:0 0;">Tên nhân viên</div>
<div class="t" style="left:421.40px;top:262.03px;font-size:12px;line-height:14px;color:#000;font-weight:normal;transform:scaleX(0.9042);transform-origin:0 0;">Tên nhân viên</div>
<div class="t" style="left:763.93px;top:262.03px;font-size:12px;line-height:14px;color:#000;font-weight:normal;transform:scaleX(0.9042);transform-origin:0 0;">23</div>
<div class="t" style="left:818.20px;top:262.03px;font-size:12px;line-height:14px;color:#000;font-weight:normal;transform:scaleX(0.9042);transform-origin:0 0;">150</div>
<div class="a" style="left:683px;top:262px;width:13px;height:13px;background:linear-gradient(135deg,#d4d4d4,#fcfcfc);box-sizing:border-box;border:1px solid #a8c4e4;"></div>
<div class="a" style="left:684px;top:263px;width:11px;height:11px;background:transparent;box-sizing:border-box;border:1px solid #f8f8f8;"></div>
<div class="a" style="left:920px;top:262px;width:13px;height:13px;background:linear-gradient(135deg,#d4d4d4,#fcfcfc);box-sizing:border-box;border:1px solid #a8c4e4;"></div>
<div class="a" style="left:921px;top:263px;width:11px;height:11px;background:transparent;box-sizing:border-box;border:1px solid #f8f8f8;"></div>
<div class="t" style="left:298.60px;top:282.03px;font-size:12px;line-height:14px;color:#000;font-weight:normal;transform:scaleX(0.9042);transform-origin:0 0;">Mã khoản mục CP</div>
<div class="t" style="left:421.40px;top:282.03px;font-size:12px;line-height:14px;color:#000;font-weight:normal;transform:scaleX(0.9042);transform-origin:0 0;">Mã khoản mục CP</div>
<div class="t" style="left:763.93px;top:282.03px;font-size:12px;line-height:14px;color:#000;font-weight:normal;transform:scaleX(0.9042);transform-origin:0 0;">24</div>
<div class="t" style="left:818.20px;top:282.03px;font-size:12px;line-height:14px;color:#000;font-weight:normal;transform:scaleX(0.9042);transform-origin:0 0;">120</div>
<div class="a" style="left:683px;top:282px;width:13px;height:13px;background:linear-gradient(135deg,#d4d4d4,#fcfcfc);box-sizing:border-box;border:1px solid #a8c4e4;"></div>
<div class="a" style="left:684px;top:283px;width:11px;height:11px;background:transparent;box-sizing:border-box;border:1px solid #f8f8f8;"></div>
<div class="a" style="left:920px;top:282px;width:13px;height:13px;background:linear-gradient(135deg,#d4d4d4,#fcfcfc);box-sizing:border-box;border:1px solid #a8c4e4;"></div>
<div class="a" style="left:921px;top:283px;width:11px;height:11px;background:transparent;box-sizing:border-box;border:1px solid #f8f8f8;"></div>
<div class="t" style="left:298.60px;top:302.03px;font-size:12px;line-height:14px;color:#000;font-weight:normal;transform:scaleX(0.9042);transform-origin:0 0;">Tên khoản mục CP</div>
<div class="t" style="left:421.40px;top:302.03px;font-size:12px;line-height:14px;color:#000;font-weight:normal;transform:scaleX(0.9042);transform-origin:0 0;">Tên khoản mục CP</div>
<div class="t" style="left:763.93px;top:302.03px;font-size:12px;line-height:14px;color:#000;font-weight:normal;transform:scaleX(0.9042);transform-origin:0 0;">25</div>
<div class="t" style="left:818.20px;top:302.03px;font-size:12px;line-height:14px;color:#000;font-weight:normal;transform:scaleX(0.9042);transform-origin:0 0;">120</div>
<div class="a" style="left:683px;top:302px;width:13px;height:13px;background:linear-gradient(135deg,#d4d4d4,#fcfcfc);box-sizing:border-box;border:1px solid #a8c4e4;"></div>
<div class="a" style="left:684px;top:303px;width:11px;height:11px;background:transparent;box-sizing:border-box;border:1px solid #f8f8f8;"></div>
<div class="a" style="left:920px;top:302px;width:13px;height:13px;background:linear-gradient(135deg,#d4d4d4,#fcfcfc);box-sizing:border-box;border:1px solid #a8c4e4;"></div>
<div class="a" style="left:921px;top:303px;width:11px;height:11px;background:transparent;box-sizing:border-box;border:1px solid #f8f8f8;"></div>
<div class="t" style="left:298.60px;top:322.03px;font-size:12px;line-height:14px;color:#000;font-weight:normal;transform:scaleX(0.9042);transform-origin:0 0;">Mã đối tượng THCP</div>
<div class="t" style="left:421.40px;top:322.03px;font-size:12px;line-height:14px;color:#000;font-weight:normal;transform:scaleX(0.9042);transform-origin:0 0;">Mã đối tượng THCP</div>
<div class="t" style="left:763.93px;top:322.03px;font-size:12px;line-height:14px;color:#000;font-weight:normal;transform:scaleX(0.9042);transform-origin:0 0;">26</div>
<div class="t" style="left:818.20px;top:322.03px;font-size:12px;line-height:14px;color:#000;font-weight:normal;transform:scaleX(0.9042);transform-origin:0 0;">120</div>
<div class="a" style="left:683px;top:322px;width:13px;height:13px;background:linear-gradient(135deg,#d4d4d4,#fcfcfc);box-sizing:border-box;border:1px solid #a8c4e4;"></div>
<div class="a" style="left:684px;top:323px;width:11px;height:11px;background:transparent;box-sizing:border-box;border:1px solid #f8f8f8;"></div>
<div class="a" style="left:920px;top:322px;width:13px;height:13px;background:linear-gradient(135deg,#d4d4d4,#fcfcfc);box-sizing:border-box;border:1px solid #a8c4e4;"></div>
<div class="a" style="left:921px;top:323px;width:11px;height:11px;background:transparent;box-sizing:border-box;border:1px solid #f8f8f8;"></div>
<div class="t" style="left:298.60px;top:342.03px;font-size:12px;line-height:14px;color:#000;font-weight:normal;transform:scaleX(0.9042);transform-origin:0 0;">Tên đối tượng THCP</div>
<div class="t" style="left:421.40px;top:342.03px;font-size:12px;line-height:14px;color:#000;font-weight:normal;transform:scaleX(0.9042);transform-origin:0 0;">Tên đối tượng THCP</div>
<div class="t" style="left:763.93px;top:342.03px;font-size:12px;line-height:14px;color:#000;font-weight:normal;transform:scaleX(0.9042);transform-origin:0 0;">27</div>
<div class="t" style="left:818.20px;top:342.03px;font-size:12px;line-height:14px;color:#000;font-weight:normal;transform:scaleX(0.9042);transform-origin:0 0;">120</div>
<div class="a" style="left:683px;top:342px;width:13px;height:13px;background:linear-gradient(135deg,#d4d4d4,#fcfcfc);box-sizing:border-box;border:1px solid #a8c4e4;"></div>
<div class="a" style="left:684px;top:343px;width:11px;height:11px;background:transparent;box-sizing:border-box;border:1px solid #f8f8f8;"></div>
<div class="a" style="left:920px;top:342px;width:13px;height:13px;background:linear-gradient(135deg,#d4d4d4,#fcfcfc);box-sizing:border-box;border:1px solid #a8c4e4;"></div>
<div class="a" style="left:921px;top:343px;width:11px;height:11px;background:transparent;box-sizing:border-box;border:1px solid #f8f8f8;"></div>
<div class="t" style="left:298.60px;top:362.03px;font-size:12px;line-height:14px;color:#000;font-weight:normal;transform:scaleX(0.9042);transform-origin:0 0;">Mã công trình</div>
<div class="t" style="left:421.40px;top:362.03px;font-size:12px;line-height:14px;color:#000;font-weight:normal;transform:scaleX(0.9042);transform-origin:0 0;">Mã công trình</div>
<div class="t" style="left:763.93px;top:362.03px;font-size:12px;line-height:14px;color:#000;font-weight:normal;transform:scaleX(0.9042);transform-origin:0 0;">28</div>
<div class="t" style="left:818.20px;top:362.03px;font-size:12px;line-height:14px;color:#000;font-weight:normal;transform:scaleX(0.9042);transform-origin:0 0;">100</div>
<div class="a" style="left:683px;top:362px;width:13px;height:13px;background:linear-gradient(135deg,#d4d4d4,#fcfcfc);box-sizing:border-box;border:1px solid #a8c4e4;"></div>
<div class="a" style="left:684px;top:363px;width:11px;height:11px;background:transparent;box-sizing:border-box;border:1px solid #f8f8f8;"></div>
<svg class="a" style="left:683px;top:362px;overflow:visible;" width="13" height="13" viewBox="683 362 13 13"><path d="M686 368.5L689.2 372L693 364.5" stroke="#3a5488" stroke-width="1.7" fill="none"/></svg>
<div class="a" style="left:920px;top:362px;width:13px;height:13px;background:linear-gradient(135deg,#d4d4d4,#fcfcfc);box-sizing:border-box;border:1px solid #a8c4e4;"></div>
<div class="a" style="left:921px;top:363px;width:11px;height:11px;background:transparent;box-sizing:border-box;border:1px solid #f8f8f8;"></div>
<div class="t" style="left:298.60px;top:382.03px;font-size:12px;line-height:14px;color:#000;font-weight:normal;transform:scaleX(0.9042);transform-origin:0 0;">Tên công trình</div>
<div class="t" style="left:421.40px;top:382.03px;font-size:12px;line-height:14px;color:#000;font-weight:normal;transform:scaleX(0.9042);transform-origin:0 0;">Tên công trình</div>
<div class="t" style="left:763.93px;top:382.03px;font-size:12px;line-height:14px;color:#000;font-weight:normal;transform:scaleX(0.9042);transform-origin:0 0;">29</div>
<div class="t" style="left:818.20px;top:382.03px;font-size:12px;line-height:14px;color:#000;font-weight:normal;transform:scaleX(0.9042);transform-origin:0 0;">120</div>
<div class="a" style="left:683px;top:382px;width:13px;height:13px;background:linear-gradient(135deg,#d4d4d4,#fcfcfc);box-sizing:border-box;border:1px solid #a8c4e4;"></div>
<div class="a" style="left:684px;top:383px;width:11px;height:11px;background:transparent;box-sizing:border-box;border:1px solid #f8f8f8;"></div>
<svg class="a" style="left:683px;top:382px;overflow:visible;" width="13" height="13" viewBox="683 382 13 13"><path d="M686 388.5L689.2 392L693 384.5" stroke="#3a5488" stroke-width="1.7" fill="none"/></svg>
<div class="a" style="left:920px;top:382px;width:13px;height:13px;background:linear-gradient(135deg,#d4d4d4,#fcfcfc);box-sizing:border-box;border:1px solid #a8c4e4;"></div>
<div class="a" style="left:921px;top:383px;width:11px;height:11px;background:transparent;box-sizing:border-box;border:1px solid #f8f8f8;"></div>
<div class="t" style="left:298.60px;top:402.03px;font-size:12px;line-height:14px;color:#000;font-weight:normal;transform:scaleX(0.9042);transform-origin:0 0;">Đơn hàng</div>
<div class="t" style="left:421.40px;top:402.03px;font-size:12px;line-height:14px;color:#000;font-weight:normal;transform:scaleX(0.9042);transform-origin:0 0;">Đơn hàng</div>
<div class="t" style="left:763.93px;top:402.03px;font-size:12px;line-height:14px;color:#000;font-weight:normal;transform:scaleX(0.9042);transform-origin:0 0;">30</div>
<div class="t" style="left:818.20px;top:402.03px;font-size:12px;line-height:14px;color:#000;font-weight:normal;transform:scaleX(0.9042);transform-origin:0 0;">120</div>
<div class="a" style="left:683px;top:402px;width:13px;height:13px;background:linear-gradient(135deg,#d4d4d4,#fcfcfc);box-sizing:border-box;border:1px solid #a8c4e4;"></div>
<div class="a" style="left:684px;top:403px;width:11px;height:11px;background:transparent;box-sizing:border-box;border:1px solid #f8f8f8;"></div>
<div class="a" style="left:920px;top:402px;width:13px;height:13px;background:linear-gradient(135deg,#d4d4d4,#fcfcfc);box-sizing:border-box;border:1px solid #a8c4e4;"></div>
<div class="a" style="left:921px;top:403px;width:11px;height:11px;background:transparent;box-sizing:border-box;border:1px solid #f8f8f8;"></div>
<div class="t" style="left:298.60px;top:422.03px;font-size:12px;line-height:14px;color:#000;font-weight:normal;transform:scaleX(0.9042);transform-origin:0 0;">Hợp đồng mua</div>
<div class="t" style="left:421.40px;top:422.03px;font-size:12px;line-height:14px;color:#000;font-weight:normal;transform:scaleX(0.9042);transform-origin:0 0;">Hợp đồng mua</div>
<div class="t" style="left:763.93px;top:422.03px;font-size:12px;line-height:14px;color:#000;font-weight:normal;transform:scaleX(0.9042);transform-origin:0 0;">31</div>
<div class="t" style="left:818.20px;top:422.03px;font-size:12px;line-height:14px;color:#000;font-weight:normal;transform:scaleX(0.9042);transform-origin:0 0;">120</div>
<div class="a" style="left:683px;top:422px;width:13px;height:13px;background:linear-gradient(135deg,#d4d4d4,#fcfcfc);box-sizing:border-box;border:1px solid #a8c4e4;"></div>
<div class="a" style="left:684px;top:423px;width:11px;height:11px;background:transparent;box-sizing:border-box;border:1px solid #f8f8f8;"></div>
<div class="a" style="left:920px;top:422px;width:13px;height:13px;background:linear-gradient(135deg,#d4d4d4,#fcfcfc);box-sizing:border-box;border:1px solid #a8c4e4;"></div>
<div class="a" style="left:921px;top:423px;width:11px;height:11px;background:transparent;box-sizing:border-box;border:1px solid #f8f8f8;"></div>
<div class="t" style="left:298.60px;top:442.03px;font-size:12px;line-height:14px;color:#000;font-weight:normal;transform:scaleX(0.9042);transform-origin:0 0;">Hợp đồng bán</div>
<div class="t" style="left:421.40px;top:442.03px;font-size:12px;line-height:14px;color:#000;font-weight:normal;transform:scaleX(0.9042);transform-origin:0 0;">Hợp đồng bán</div>
<div class="t" style="left:763.93px;top:442.03px;font-size:12px;line-height:14px;color:#000;font-weight:normal;transform:scaleX(0.9042);transform-origin:0 0;">32</div>
<div class="t" style="left:818.20px;top:442.03px;font-size:12px;line-height:14px;color:#000;font-weight:normal;transform:scaleX(0.9042);transform-origin:0 0;">120</div>
<div class="a" style="left:683px;top:442px;width:13px;height:13px;background:linear-gradient(135deg,#d4d4d4,#fcfcfc);box-sizing:border-box;border:1px solid #a8c4e4;"></div>
<div class="a" style="left:684px;top:443px;width:11px;height:11px;background:transparent;box-sizing:border-box;border:1px solid #f8f8f8;"></div>
<div class="a" style="left:920px;top:442px;width:13px;height:13px;background:linear-gradient(135deg,#d4d4d4,#fcfcfc);box-sizing:border-box;border:1px solid #a8c4e4;"></div>
<div class="a" style="left:921px;top:443px;width:11px;height:11px;background:transparent;box-sizing:border-box;border:1px solid #f8f8f8;"></div>
<div class="t" style="left:298.60px;top:462.03px;font-size:12px;line-height:14px;color:#000;font-weight:normal;transform:scaleX(0.9042);transform-origin:0 0;">Mã thống kê</div>
<div class="t" style="left:421.40px;top:462.03px;font-size:12px;line-height:14px;color:#000;font-weight:normal;transform:scaleX(0.9042);transform-origin:0 0;">Mã thống kê</div>
<div class="t" style="left:763.93px;top:462.03px;font-size:12px;line-height:14px;color:#000;font-weight:normal;transform:scaleX(0.9042);transform-origin:0 0;">33</div>
<div class="t" style="left:818.20px;top:462.03px;font-size:12px;line-height:14px;color:#000;font-weight:normal;transform:scaleX(0.9042);transform-origin:0 0;">100</div>
<div class="a" style="left:683px;top:462px;width:13px;height:13px;background:linear-gradient(135deg,#d4d4d4,#fcfcfc);box-sizing:border-box;border:1px solid #a8c4e4;"></div>
<div class="a" style="left:684px;top:463px;width:11px;height:11px;background:transparent;box-sizing:border-box;border:1px solid #f8f8f8;"></div>
<div class="a" style="left:920px;top:462px;width:13px;height:13px;background:linear-gradient(135deg,#d4d4d4,#fcfcfc);box-sizing:border-box;border:1px solid #a8c4e4;"></div>
<div class="a" style="left:921px;top:463px;width:11px;height:11px;background:transparent;box-sizing:border-box;border:1px solid #f8f8f8;"></div>
<div class="t" style="left:298.60px;top:482.03px;font-size:12px;line-height:14px;color:#000;font-weight:normal;transform:scaleX(0.9042);transform-origin:0 0;">Tên thống kê</div>
<div class="t" style="left:421.40px;top:482.03px;font-size:12px;line-height:14px;color:#000;font-weight:normal;transform:scaleX(0.9042);transform-origin:0 0;">Tên thống kê</div>
<div class="t" style="left:763.93px;top:482.03px;font-size:12px;line-height:14px;color:#000;font-weight:normal;transform:scaleX(0.9042);transform-origin:0 0;">34</div>
<div class="t" style="left:818.20px;top:482.03px;font-size:12px;line-height:14px;color:#000;font-weight:normal;transform:scaleX(0.9042);transform-origin:0 0;">120</div>
<div class="a" style="left:683px;top:482px;width:13px;height:13px;background:linear-gradient(135deg,#d4d4d4,#fcfcfc);box-sizing:border-box;border:1px solid #a8c4e4;"></div>
<div class="a" style="left:684px;top:483px;width:11px;height:11px;background:transparent;box-sizing:border-box;border:1px solid #f8f8f8;"></div>
<div class="a" style="left:920px;top:482px;width:13px;height:13px;background:linear-gradient(135deg,#d4d4d4,#fcfcfc);box-sizing:border-box;border:1px solid #a8c4e4;"></div>
<div class="a" style="left:921px;top:483px;width:11px;height:11px;background:transparent;box-sizing:border-box;border:1px solid #f8f8f8;"></div>
<div class="t" style="left:298.60px;top:502.03px;font-size:12px;line-height:14px;color:#000;font-weight:normal;transform:scaleX(0.9042);transform-origin:0 0;">Mã đơn vị</div>
<div class="t" style="left:421.40px;top:502.03px;font-size:12px;line-height:14px;color:#000;font-weight:normal;transform:scaleX(0.9042);transform-origin:0 0;">Mã đơn vị</div>
<div class="t" style="left:763.93px;top:502.03px;font-size:12px;line-height:14px;color:#000;font-weight:normal;transform:scaleX(0.9042);transform-origin:0 0;">35</div>
<div class="t" style="left:818.20px;top:502.03px;font-size:12px;line-height:14px;color:#000;font-weight:normal;transform:scaleX(0.9042);transform-origin:0 0;">130</div>
<div class="a" style="left:683px;top:502px;width:13px;height:13px;background:linear-gradient(135deg,#d4d4d4,#fcfcfc);box-sizing:border-box;border:1px solid #a8c4e4;"></div>
<div class="a" style="left:684px;top:503px;width:11px;height:11px;background:transparent;box-sizing:border-box;border:1px solid #f8f8f8;"></div>
<div class="a" style="left:920px;top:502px;width:13px;height:13px;background:linear-gradient(135deg,#d4d4d4,#fcfcfc);box-sizing:border-box;border:1px solid #a8c4e4;"></div>
<div class="a" style="left:921px;top:503px;width:11px;height:11px;background:transparent;box-sizing:border-box;border:1px solid #f8f8f8;"></div>
<div class="t" style="left:298.60px;top:522.03px;font-size:12px;line-height:14px;color:#000;font-weight:normal;transform:scaleX(0.9042);transform-origin:0 0;">Tên đơn vị</div>
<div class="t" style="left:421.40px;top:522.03px;font-size:12px;line-height:14px;color:#000;font-weight:normal;transform:scaleX(0.9042);transform-origin:0 0;">Tên đơn vị</div>
<div class="t" style="left:763.93px;top:522.03px;font-size:12px;line-height:14px;color:#000;font-weight:normal;transform:scaleX(0.9042);transform-origin:0 0;">36</div>
<div class="t" style="left:818.20px;top:522.03px;font-size:12px;line-height:14px;color:#000;font-weight:normal;transform:scaleX(0.9042);transform-origin:0 0;">150</div>
<div class="a" style="left:683px;top:522px;width:13px;height:13px;background:linear-gradient(135deg,#d4d4d4,#fcfcfc);box-sizing:border-box;border:1px solid #a8c4e4;"></div>
<div class="a" style="left:684px;top:523px;width:11px;height:11px;background:transparent;box-sizing:border-box;border:1px solid #f8f8f8;"></div>
<div class="a" style="left:920px;top:522px;width:13px;height:13px;background:linear-gradient(135deg,#d4d4d4,#fcfcfc);box-sizing:border-box;border:1px solid #a8c4e4;"></div>
<div class="a" style="left:921px;top:523px;width:11px;height:11px;background:transparent;box-sizing:border-box;border:1px solid #f8f8f8;"></div>
<div class="t" style="left:298.60px;top:542.03px;font-size:12px;line-height:14px;color:#000;font-weight:normal;transform:scaleX(0.9042);transform-origin:0 0;">CP hợp lý/không hợp lý</div>
<div class="t" style="left:421.40px;top:542.03px;font-size:12px;line-height:14px;color:#000;font-weight:normal;transform:scaleX(0.9042);transform-origin:0 0;">CP hợp lý/không hợp lý</div>
<div class="t" style="left:763.93px;top:542.03px;font-size:12px;line-height:14px;color:#000;font-weight:normal;transform:scaleX(0.9042);transform-origin:0 0;">37</div>
<div class="t" style="left:818.20px;top:542.03px;font-size:12px;line-height:14px;color:#000;font-weight:normal;transform:scaleX(0.9042);transform-origin:0 0;">180</div>
<div class="a" style="left:683px;top:542px;width:13px;height:13px;background:linear-gradient(135deg,#d4d4d4,#fcfcfc);box-sizing:border-box;border:1px solid #a8c4e4;"></div>
<div class="a" style="left:684px;top:543px;width:11px;height:11px;background:transparent;box-sizing:border-box;border:1px solid #f8f8f8;"></div>
<svg class="a" style="left:683px;top:542px;overflow:visible;" width="13" height="13" viewBox="683 542 13 13"><path d="M686 548.5L689.2 552L693 544.5" stroke="#3a5488" stroke-width="1.7" fill="none"/></svg>
<div class="a" style="left:920px;top:542px;width:13px;height:13px;background:linear-gradient(135deg,#d4d4d4,#fcfcfc);box-sizing:border-box;border:1px solid #a8c4e4;"></div>
<div class="a" style="left:921px;top:543px;width:11px;height:11px;background:transparent;box-sizing:border-box;border:1px solid #f8f8f8;"></div>
<div class="t" style="left:298.60px;top:562.03px;font-size:12px;line-height:14px;color:#000;font-weight:normal;transform:scaleX(0.9042);transform-origin:0 0;">Trường mở rộng 1</div>
<div class="t" style="left:421.40px;top:562.03px;font-size:12px;line-height:14px;color:#000;font-weight:normal;transform:scaleX(0.9042);transform-origin:0 0;">Trường mở rộng 1</div>
<div class="t" style="left:763.93px;top:562.03px;font-size:12px;line-height:14px;color:#000;font-weight:normal;transform:scaleX(0.9042);transform-origin:0 0;">38</div>
<div class="t" style="left:818.20px;top:562.03px;font-size:12px;line-height:14px;color:#000;font-weight:normal;transform:scaleX(0.9042);transform-origin:0 0;">130</div>
<div class="a" style="left:683px;top:562px;width:13px;height:13px;background:linear-gradient(135deg,#d4d4d4,#fcfcfc);box-sizing:border-box;border:1px solid #a8c4e4;"></div>
<div class="a" style="left:684px;top:563px;width:11px;height:11px;background:transparent;box-sizing:border-box;border:1px solid #f8f8f8;"></div>
<div class="a" style="left:920px;top:562px;width:13px;height:13px;background:linear-gradient(135deg,#d4d4d4,#fcfcfc);box-sizing:border-box;border:1px solid #a8c4e4;"></div>
<div class="a" style="left:921px;top:563px;width:11px;height:11px;background:transparent;box-sizing:border-box;border:1px solid #f8f8f8;"></div>
<div class="t" style="left:298.60px;top:582.03px;font-size:12px;line-height:14px;color:#000;font-weight:normal;transform:scaleX(0.9042);transform-origin:0 0;">Trường mở rộng 2</div>
<div class="t" style="left:421.40px;top:582.03px;font-size:12px;line-height:14px;color:#000;font-weight:normal;transform:scaleX(0.9042);transform-origin:0 0;">Trường mở rộng 2</div>
<div class="t" style="left:763.93px;top:582.03px;font-size:12px;line-height:14px;color:#000;font-weight:normal;transform:scaleX(0.9042);transform-origin:0 0;">39</div>
<div class="t" style="left:818.20px;top:582.03px;font-size:12px;line-height:14px;color:#000;font-weight:normal;transform:scaleX(0.9042);transform-origin:0 0;">130</div>
<div class="a" style="left:683px;top:582px;width:13px;height:13px;background:linear-gradient(135deg,#d4d4d4,#fcfcfc);box-sizing:border-box;border:1px solid #a8c4e4;"></div>
<div class="a" style="left:684px;top:583px;width:11px;height:11px;background:transparent;box-sizing:border-box;border:1px solid #f8f8f8;"></div>
<div class="a" style="left:920px;top:582px;width:13px;height:13px;background:linear-gradient(135deg,#d4d4d4,#fcfcfc);box-sizing:border-box;border:1px solid #a8c4e4;"></div>
<div class="a" style="left:921px;top:583px;width:11px;height:11px;background:transparent;box-sizing:border-box;border:1px solid #f8f8f8;"></div>
<div class="a" style="left:683px;top:602px;width:13px;height:13px;background:linear-gradient(135deg,#d4d4d4,#fcfcfc);box-sizing:border-box;border:1px solid #a8c4e4;"></div>
<div class="a" style="left:684px;top:603px;width:11px;height:11px;background:transparent;box-sizing:border-box;border:1px solid #f8f8f8;"></div>
<div class="a" style="left:920px;top:602px;width:13px;height:13px;background:linear-gradient(135deg,#d4d4d4,#fcfcfc);box-sizing:border-box;border:1px solid #a8c4e4;"></div>
<div class="a" style="left:921px;top:603px;width:11px;height:11px;background:transparent;box-sizing:border-box;border:1px solid #f8f8f8;"></div>
<div class="a" style="left:294px;top:605px;width:721px;height:1px;background:#7ea5d5;"></div>
<div class="a" style="left:294px;top:606px;width:721px;height:13px;background:#f0f0f0;"></div>
<div class="a" style="left:294px;top:606px;width:123px;height:13px;background:#d4d4d4;"></div>
<div class="a" style="left:417px;top:605px;width:1px;height:14px;background:#7ea5d5;"></div>
<div class="t" style="left:297.20px;top:606.03px;font-size:12px;line-height:14px;color:#000;font-weight:normal;transform:scaleX(0.9042);transform-origin:0 0;">Số dòng = 58</div>
<div class="a" style="left:1040px;top:367px;width:25px;height:25px;background:#adc8e8;box-sizing:border-box;border:1px solid #7ea5d5;"></div>
<div class="a" style="left:1040px;top:399px;width:25px;height:25px;background:#adc8e8;box-sizing:border-box;border:1px solid #7ea5d5;"></div>
<svg class="a" style="left:1040px;top:367px;overflow:visible;" width="25" height="25" viewBox="1040 367 25 25"><path d="M1045.2 378.2L1051.4 372.2L1057.6 378.2M1051.4 372.8V384.6" stroke="#1a901a" stroke-width="4.2" stroke-linecap="round" stroke-linejoin="round" fill="none"/><path d="M1045.2 378.2L1051.4 372.2L1057.6 378.2M1051.4 372.8V384.6" stroke="#48c838" stroke-width="2.5" stroke-linecap="round" stroke-linejoin="round" fill="none"/><path d="M1050.9 374.5V383" stroke="#b8f0a0" stroke-width="0.9" stroke-linecap="round"/></svg>
<svg class="a" style="left:1040px;top:399px;overflow:visible;" width="25" height="25" viewBox="1040 399 25 25"><path d="M1045.2 410.8L1051.4 416.8L1057.6 410.8M1051.4 416.2V404.4" stroke="#1a901a" stroke-width="4.2" stroke-linecap="round" stroke-linejoin="round" fill="none"/><path d="M1045.2 410.8L1051.4 416.8L1057.6 410.8M1051.4 416.2V404.4" stroke="#48c838" stroke-width="2.5" stroke-linecap="round" stroke-linejoin="round" fill="none"/><path d="M1050.9 405.8V414" stroke="#b8f0a0" stroke-width="0.9" stroke-linecap="round"/></svg>
<div class="a" style="left:293px;top:629px;width:75px;height:25px;background:#adc8e8;box-sizing:border-box;border:1px solid #7ea5d5;"></div>
<div class="t" style="left:327.30px;top:635.03px;font-size:12px;line-height:14px;color:#000;font-weight:normal;transform:scaleX(0.9350);transform-origin:0 0;">Giúp</div>
<div class="a" style="left:685px;top:629px;width:95px;height:25px;background:#adc8e8;box-sizing:border-box;border:1px solid #7ea5d5;"></div>
<div class="t" style="left:718.70px;top:635.03px;font-size:12px;line-height:14px;color:#000;font-weight:normal;transform:scaleX(0.9257);transform-origin:0 0;">Thêm cột</div>
<div class="a" style="left:785px;top:629px;width:128px;height:25px;background:#adc8e8;box-sizing:border-box;border:1px solid #7ea5d5;"></div>
<div class="t" style="left:809.40px;top:635.03px;font-size:12px;line-height:14px;color:#000;font-weight:normal;transform:scaleX(0.9146);transform-origin:0 0;">Lấy mẫu ngầm định</div>
<div class="a" style="left:918px;top:629px;width:75px;height:25px;background:#adc8e8;box-sizing:border-box;border:1px solid #7ea5d5;"></div>
<div class="t" style="left:955.30px;top:635.03px;font-size:12px;line-height:14px;color:#000;font-weight:normal;transform:scaleX(0.8836);transform-origin:0 0;">Cất</div>
<div class="a" style="left:998px;top:629px;width:75px;height:25px;background:#adc8e8;box-sizing:border-box;border:1px solid #7ea5d5;"></div>
<div class="t" style="left:1026.30px;top:635.03px;font-size:12px;line-height:14px;color:#000;font-weight:normal;transform:scaleX(0.9468);transform-origin:0 0;">Hủy bỏ</div>
<svg class="a" style="left:296px;top:632px;overflow:visible;" width="18" height="18" viewBox="296 632 18 18"><circle cx="304.6" cy="640.6" r="7.2" fill="url(#hg)" stroke="#1a5ab0" stroke-width="1"/><path d="M302.3 638.4Q302.3 636.0 304.6 636.0Q307.20000000000005 636.0 307.20000000000005 638.2Q307.20000000000005 639.6 305.40000000000003 640.6Q304.6 641.2 304.6 642.4" stroke="#fff" stroke-width="1.9" fill="none"/><rect x="303.6" y="643.4" width="2" height="2" fill="#fff"/></svg>
<svg class="a" style="left:688px;top:633px;overflow:visible;" width="19" height="17" viewBox="688 633 19 17"><rect x="689.5" y="634.5" width="16" height="14" rx="2.2" fill="#4aa0e8" stroke="#5ab0f0" stroke-width="1"/><rect x="692" y="637" width="5" height="2.4" rx="0.8" fill="#f8c840"/><rect x="698.5" y="637" width="5.5" height="2.4" rx="0.8" fill="#e8f4ff"/><rect x="692" y="640.6" width="5" height="2.4" rx="0.8" fill="#ffffff"/><rect x="698.5" y="640.6" width="5.5" height="2.4" rx="0.8" fill="#f8c840"/><rect x="692" y="644.2" width="5" height="2.4" rx="0.8" fill="#b8e0ff"/><rect x="698.5" y="644.2" width="5.5" height="2.4" rx="0.8" fill="#b8e0ff"/></svg>
<svg class="a" style="left:789px;top:632px;overflow:visible;" width="17" height="17" viewBox="789 632 17 17"><path d="M790.2 647.0L803.8000000000001 633.5V647.0Z" fill="#f4c860" stroke="#b08030" stroke-width="0.9" stroke-linejoin="round"/><path d="M797.4000000000001 643.7L800.4000000000001 640.7V643.7Z" fill="#adc8e8" stroke="#a07028" stroke-width="0.9"/><rect x="793.2" y="645.2" width="0.9" height="1.2" fill="#a07028"/><rect x="802.0000000000001" y="636.0" width="1.2" height="0.9" fill="#a07028"/><rect x="795.2" y="645.2" width="0.9" height="1.2" fill="#a07028"/><rect x="802.0000000000001" y="638.0" width="1.2" height="0.9" fill="#a07028"/><rect x="797.2" y="645.2" width="0.9" height="1.2" fill="#a07028"/><rect x="802.0000000000001" y="640.0" width="1.2" height="0.9" fill="#a07028"/><rect x="799.2" y="645.2" width="0.9" height="1.2" fill="#a07028"/><rect x="802.0000000000001" y="642.0" width="1.2" height="0.9" fill="#a07028"/><rect x="801.2" y="645.2" width="0.9" height="1.2" fill="#a07028"/><rect x="802.0000000000001" y="644.0" width="1.2" height="0.9" fill="#a07028"/></svg>
<svg class="a" style="left:922px;top:632px;overflow:visible;" width="17" height="17" viewBox="922 632 17 17"><rect x="923.5" y="633.6" width="13.2" height="13.8" rx="0.5" fill="#2844e8" stroke="#1a30c0" stroke-width="1"/><rect x="927.6" y="634.2" width="8" height="4.6" fill="#d8d8d8"/><rect x="933.6" y="635" width="1.6" height="2" fill="#2844e8"/><rect x="926" y="641" width="8.6" height="6" fill="#e8e8e8"/></svg>
<svg class="a" style="left:1001px;top:632px;overflow:visible;" width="18" height="18" viewBox="1001 632 18 18"><circle cx="1009.5" cy="640.4" r="7.2" fill="#e83030" stroke="#c01818" stroke-width="1"/><circle cx="1009.5" cy="640.4" r="4.6" fill="none" stroke="#ffd8d8" stroke-width="1.4"/><path d="M1006.3 643.6L1012.7 637.2" stroke="#ffd8d8" stroke-width="1.4"/></svg>
<div class="a" style="left:1079px;top:654px;width:2px;height:2px;background:#a09888;"></div>
<div class="a" style="left:1079px;top:654px;width:1px;height:1px;background:#ffffff;"></div>
<div class="a" style="left:1076px;top:657px;width:2px;height:2px;background:#a09888;"></div>
<div class="a" style="left:1076px;top:657px;width:1px;height:1px;background:#ffffff;"></div>
<div class="a" style="left:1079px;top:657px;width:2px;height:2px;background:#a09888;"></div>
<div class="a" style="left:1079px;top:657px;width:1px;height:1px;background:#ffffff;"></div>
<div class="a" style="left:1073px;top:660px;width:2px;height:2px;background:#a09888;"></div>
<div class="a" style="left:1073px;top:660px;width:1px;height:1px;background:#ffffff;"></div>
<div class="a" style="left:1076px;top:660px;width:2px;height:2px;background:#a09888;"></div>
<div class="a" style="left:1076px;top:660px;width:1px;height:1px;background:#ffffff;"></div>
<div class="a" style="left:1079px;top:660px;width:2px;height:2px;background:#a09888;"></div>
<div class="a" style="left:1079px;top:660px;width:1px;height:1px;background:#ffffff;"></div>
<svg class="a" style="left:0;top:0;pointer-events:none" width="1213" height="697" viewBox="0 0 1213 697"><path d="M114 20.2C108 19 101 19 89 21.4C84 23 80 26 77.7 28.4C75 31 73 33 72 37C71.5 40 72 42 73.2 43.7C75 46 77 47.5 79 48.6C83 50.5 88 51 93 51.5C100 52.5 107 53.5 113.6 53.6C120 53.8 126 53.4 130 52.7C135 51.8 139 50.8 140.8 49.4C143.3 46 143.6 44 143.3 41.2C143 37 142.6 34 141.6 32.1C140 30 138 29 135.8 28C133 26.5 130 24.8 127.6 23.5C125 22.3 122 21.6 120.2 21.3" fill="none" stroke="#f01010" stroke-width="2.1" stroke-linecap="round"/><path d="M705.3 357.5C698 356 690 355.5 681.6 355.3C672 355 665 354.5 660.1 354.5C657 355 655.5 355.5 654.1 356.2C651 359 649 361.5 647.2 363.9C645 367 643.5 369 642.9 370.8C642 374 641.8 378 642 381.1C642.5 383 643.5 384 644.6 384.6C648 387 651 388.8 654.1 390.2C656 391 657 391.3 658.4 391.5C662 393 666 395 670.4 396.2C676 396.8 683 396.8 690.2 396.6C697 396.2 705 395.6 710 394.9C713 393 715 391 716 388.9C717.5 385 718 381 717.8 377.7C717.5 374 716.8 372 716 370.8C715 368.5 713 367 711.8 365.7C710.8 364 710 363 709.2 362.6C707.5 362.3 706 362.4 704.9 362.2C703 361 701.5 359.5 699.7 358.3" fill="none" stroke="#f01010" stroke-width="2.1" stroke-linecap="round"/></svg>
</body></html>
